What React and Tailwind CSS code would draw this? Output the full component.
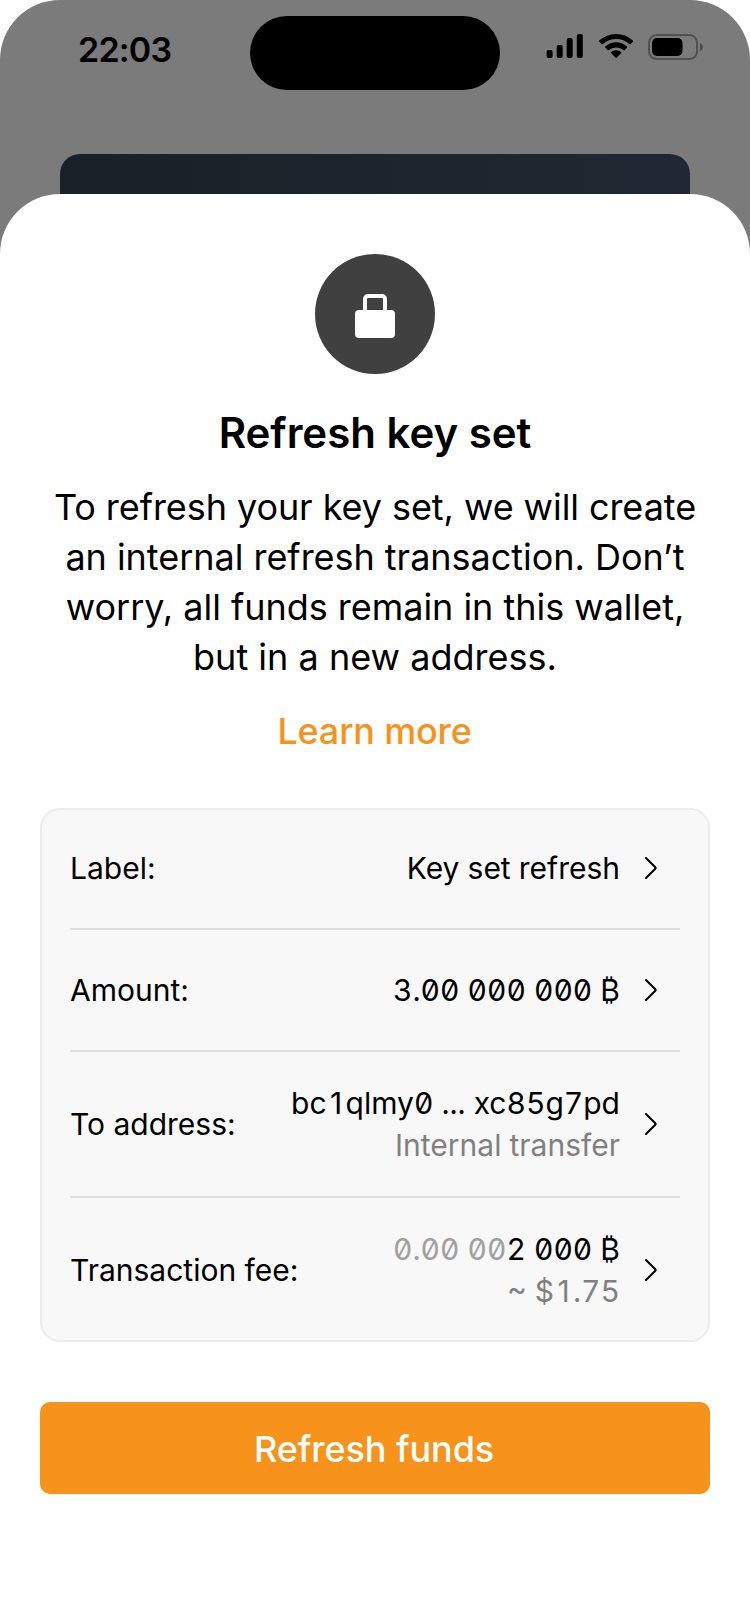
import React from 'react'

function SignalIcon() {
  return (
    <svg width="38" height="24" viewBox="0 0 38 24" fill="black">
      <rect x="0.6" y="16" width="6" height="8" rx="2" />
      <rect x="10.7" y="11" width="6" height="13" rx="2" />
      <rect x="20.7" y="4" width="6" height="20" rx="2" />
      <rect x="30.8" y="0" width="6" height="24" rx="2" />
    </svg>
  )
}

function WifiIcon() {
  return (
    <svg width="34.3" height="24" viewBox="0 0 17.15 12" fill="black">
      <path d="M8.57 2.47c2.49 0 4.88.93 6.68 2.6.13.13.35.13.49 0l1.3-1.29a.34.34 0 0 0 0-.5C12.31-1.09 4.84-1.09.1 3.28a.34.34 0 0 0 0 .5l1.3 1.29c.13.13.35.13.48 0 1.8-1.67 4.2-2.6 6.69-2.6zM8.57 6.69c1.36 0 2.67.5 3.68 1.4.14.13.35.13.49-.01l1.29-1.29a.35.35 0 0 0-.01-.51 7.95 7.95 0 0 0-10.89 0 .35.35 0 0 0 0 .51l1.29 1.29c.13.14.35.14.48.01a5.53 5.53 0 0 1 3.67-1.4zM11.15 9.54a.35.35 0 0 0-.01-.51 4.11 4.11 0 0 0-5.13 0 .35.35 0 0 0-.01.51l2.33 2.33c.14.14.36.14.5 0z" />
    </svg>
  )
}

function BatteryIcon() {
  return (
    <svg width="56" height="26" viewBox="0 0 56 26">
      <rect x="1" y="1" width="48" height="24" rx="7.6" fill="none" stroke="black" strokeOpacity="0.35" strokeWidth="2" />
      <path d="M52 9v8.2c1.7-.7 2.8-2.3 2.8-4.1S53.700 9.700 52 9z" fill="black" fillOpacity="0.4" />
      <rect x="4" y="4" width="30.5" height="18" rx="5" fill="black" />
    </svg>
  )
}

function LockIcon() {
  return (
    <svg width="40" height="44" viewBox="0 0 40 44">
      <path d="M10 20V5a3 3 0 0 1 3-3h14a3 3 0 0 1 3 3v15" fill="none" stroke="white" strokeWidth="4" />
      <rect y="16" width="40" height="28" rx="4" fill="white" />
    </svg>
  )
}

function Chevron() {
  return (
    <svg width="12" height="22" viewBox="0 0 12 22" fill="none" stroke="black" strokeWidth="2" strokeLinecap="round" strokeLinejoin="round">
      <path d="M1 1L10.3 10.3Q11 11 10.3 11.7L1 21" />
    </svg>
  )
}

/* Plain "1" in a tabular-width cell */
function One() {
  return <span className="inline-block w-[19px] text-center normal-nums">1</span>
}

function Row({ label, className, children }) {
  return (
    <div className={'flex items-center border-[#dedede] pr-[23px] ' + className}>
      <span className="whitespace-nowrap">{label}</span>
      <div className="ml-auto text-right whitespace-nowrap slashed-zero tabular-nums">{children}</div>
      <span className="ml-[25px]"><Chevron /></span>
    </div>
  )
}

export default function App() {
  return (
    <div className="h-[1624px] w-[750px] bg-white font-['Inter',sans-serif] text-black">
      <div className="flex h-full flex-col overflow-hidden rounded-t-[60px] bg-[#7b7b7b]">
        <header className="flex h-[154px] shrink-0 items-start">
          <div className="w-[250px] pt-[29px] pl-[78px] text-[34px] leading-[42px] font-semibold tracking-[-0.8px]">22:03</div>
          <div className="mt-4 h-[74px] w-[250px] rounded-full bg-black" />
          <div className="flex items-start pt-[34px] pl-[46px]">
            <SignalIcon />
            <span className="ml-[14.5px]"><WifiIcon /></span>
            <span className="ml-[15.6px]"><BatteryIcon /></span>
          </div>
        </header>
        <div className="mx-[60px] -mb-5 h-[60px] shrink-0 rounded-t-[20px] bg-linear-to-r from-[#1a2027] to-[#222833]" />
        <main className="relative flex grow flex-col items-center rounded-t-[60px] bg-white px-10 pt-[60px]">
          <div className="flex size-[120px] items-center justify-center rounded-full bg-[#404040] pt-1">
            <LockIcon />
          </div>
          <h1 className="mt-[34px] text-[42px] leading-[50px] font-semibold tracking-[-0.03px]">Refresh key set</h1>
          <p className="mt-6 text-center text-[36px] leading-[50px] tracking-[-0.03px] whitespace-nowrap">
            <span className="tracking-[-0.07px]">To refresh your key set, we will create</span><br />
            an internal refresh transaction. Don’t<br />
            worry, all funds remain in this wallet,<br />
            <span className="tracking-[0.02px]">but in a new address.</span>
          </p>
          <a className="mt-6 mr-px text-[36px] leading-[50px] font-medium tracking-[-0.18px] text-[#f7931a]">Learn more</a>
          <section className="mt-[52px] w-full rounded-[20px] bg-[#f8f8f8] px-[30px] text-[30px] leading-[42px] inset-ring-2 inset-ring-[#ececec]">
            <Row label="Label:" className="h-[122px] border-b-2">Key set refresh</Row>
            <Row label="Amount:" className="h-[122px] border-b-2">3.00 000 000 ₿</Row>
            <Row label="To address:" className="h-[146px] border-b-2">
              <div>bc<One />qlmy0 ... xc85g7pd</div>
              <div className="text-[#808080]">Internal transfer</div>
            </Row>
            <Row label="Transaction fee:" className="h-[144px]">
              <div><span className="text-[#a0a0a0]">0.00 00</span>2 000 ₿</div>
              <div className="text-[#808080]">~ $<One />.75</div>
            </Row>
          </section>
          <button className="mt-[60px] h-[92px] w-full rounded-[10px] bg-[#f7931a] pt-0.5 pr-0.5 text-[36px] font-medium tracking-[-0.08px] text-white">Refresh funds</button>
        </main>
      </div>
    </div>
  )
}
